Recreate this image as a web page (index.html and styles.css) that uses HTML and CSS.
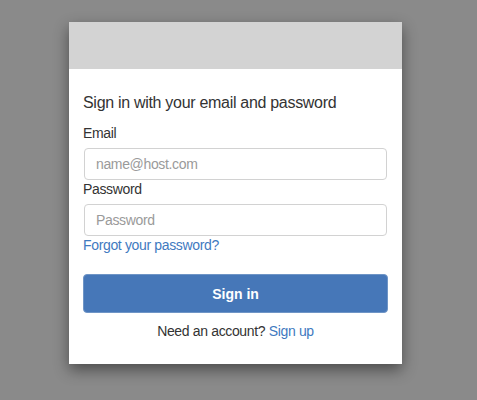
FILE: index.html
```html
<!DOCTYPE html>
<html lang="en">
<head>
    <meta charset="UTF-8">
    <meta name="viewport" content="width=device-width, initial-scale=1.0">
    <title>Sign in</title>
    <link rel="stylesheet" href="styles.css">
</head>
<body>
    <div class="modal">
        <div class="banner"></div>
        <form class="form">
            <h2 class="title">Sign in with your email and password</h2>
            <label class="label" for="email">Email</label>
            <input class="input" id="email" type="text" placeholder="name@host.com">
            <label class="label" for="password">Password</label>
            <input class="input" id="password" type="password" placeholder="Password">
            <a class="link forgot" href="#">Forgot your password?</a>
            <button class="submit" type="button">Sign in</button>
            <p class="signup">Need an account? <a class="link" href="#">Sign up</a></p>
        </form>
    </div>
</body>
</html>
```

FILE: styles.css
```css
/* Page */
body {
    margin: 0;
    padding: 22px 0;
    background: #8a8a8a;
    font-family: 'Liberation Sans', Arial, Helvetica, sans-serif;
    color: #333;
}
.modal {
    width: 333px;
    margin: 0 0 0 69px;
    background: #fff;
    box-shadow: 0 6px 14px rgba(0, 0, 0, 0.45);
}
.banner {
    height: 47px;
    background: #d3d3d3;
}
/* Form */
.form {
    display: flex;
    flex-direction: column;
    padding: 24px 14px 25px;
}
.title {
    margin: 0 0 12px;
    font-size: 16px;
    font-weight: normal;
    line-height: 20px;
    letter-spacing: -0.3px;
}
.label {
    font-size: 14px;
    line-height: 16px;
    letter-spacing: -0.35px;
}
.input {
    box-sizing: border-box;
    height: 32px;
    margin: 7px 1px 1px;
    padding: 0 11px;
    border: 1px solid #d2d2d2;
    border-radius: 4px;
    font-family: inherit;
    font-size: 14px;
    letter-spacing: -0.35px;
    color: #333;
}
.input::placeholder {
    color: #9a9a9a;
}
.link {
    color: #3f7abf;
    text-decoration: none;
}
.forgot {
    font-size: 14px;
    line-height: 16px;
    letter-spacing: -0.35px;
    align-self: flex-start;
}
.submit {
    height: 39px;
    margin-top: 21px;
    border: 1px solid #6f95c6;
    border-radius: 4px;
    background: #4677b8;
    color: #fff;
    font-family: inherit;
    font-size: 14px;
    font-weight: bold;
}
.signup {
    margin: 10px 0 0;
    text-align: center;
    font-size: 14px;
    line-height: 16px;
    letter-spacing: -0.35px;
}
```
